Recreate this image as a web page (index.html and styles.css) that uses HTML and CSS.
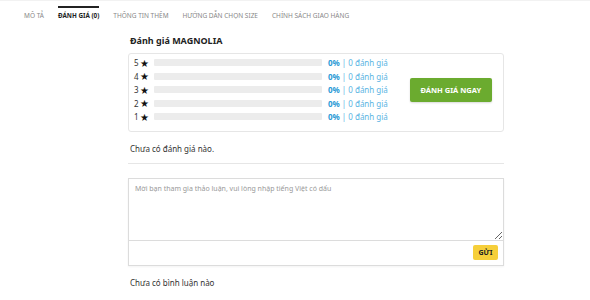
FILE: index.html
```html
<!DOCTYPE html>
<html lang="vi">
<head>
    <meta charset="UTF-8">
    <meta name="viewport" content="width=device-width, initial-scale=1.0">
    <title>Đánh giá MAGNOLIA</title>
    <link rel="stylesheet" href="styles.css">
</head>
<body>
    <ul class="tabs">
        <li>Mô tả</li>
        <li class="active">Đánh giá (0)</li>
        <li>Thông tin thêm</li>
        <li>Hướng dẫn chọn size</li>
        <li>Chính sách giao hàng</li>
    </ul>

    <div class="content">
        <h3 class="title">Đánh giá MAGNOLIA</h3>

        <div class="rating-box">
            <div class="rating-list">
                <div class="rating-row"><span class="num">5</span><span class="star">★</span><div class="bar"></div><span class="pct">0%</span><span class="count">| 0 đánh giá</span></div>
                <div class="rating-row"><span class="num">4</span><span class="star">★</span><div class="bar"></div><span class="pct">0%</span><span class="count">| 0 đánh giá</span></div>
                <div class="rating-row"><span class="num">3</span><span class="star">★</span><div class="bar"></div><span class="pct">0%</span><span class="count">| 0 đánh giá</span></div>
                <div class="rating-row"><span class="num">2</span><span class="star">★</span><div class="bar"></div><span class="pct">0%</span><span class="count">| 0 đánh giá</span></div>
                <div class="rating-row"><span class="num">1</span><span class="star">★</span><div class="bar"></div><span class="pct">0%</span><span class="count">| 0 đánh giá</span></div>
            </div>
            <div class="rate-action">
                <button class="rate-btn">Đánh giá ngay</button>
            </div>
        </div>

        <p class="empty">Chưa có đánh giá nào.</p>
        <hr class="divider">

        <div class="comment-box">
            <textarea placeholder="Mời bạn tham gia thảo luận, vui lòng nhập tiếng Việt có dấu"></textarea>
            <div class="comment-footer">
                <button class="send-btn">Gửi</button>
            </div>
        </div>

        <p class="empty last">Chưa có bình luận nào</p>
    </div>
</body>
</html>
```

FILE: styles.css
```css
body {
    margin: 0;
    font-family: "Noto Sans", "Open Sans", sans-serif;
    color: #333;
    background: #fff;
}

.tabs {
    list-style: none;
    margin: 0;
    padding: 0 0 0 24px;
    display: flex;
    gap: 14px;
    border-top: 1px solid #f2f2f2;
}

.tabs li {
    font-size: 6.5px;
    text-transform: uppercase;
    color: #888;
    padding: 3px 0 12px;
    border-top: 2px solid transparent;
    margin-top: 5px;
}

.tabs li.active {
    color: #222;
    font-size: 6.3px;
    font-weight: 700;
    border-top-color: #222;
}

.content {
    margin-left: 128px;
    width: 376px;
}

.title {
    font-size: 9px;
    font-weight: 700;
    color: #222;
    margin: 2px 0 6px 2px;
}

.rating-box {
    display: flex;
    border: 1px solid #e6e6e6;
    border-radius: 3px;
    padding: 2px 0 7px 5px;
}

.rating-list {
    display: flex;
    flex-direction: column;
}

.rating-row {
    display: flex;
    align-items: center;
    height: 13.5px;
    font-size: 8px;
}

.num {
    width: 6px;
    color: #333;
}

.star {
    font-size: 10px;
    color: #111;
    width: 14px;
}

.bar {
    width: 168px;
    height: 7px;
    background: #ececec;
    border-radius: 1px;
    margin-right: 6px;
}

.pct {
    color: #2a9ad6;
    font-weight: 700;
    margin-right: 2px;
}

.count {
    color: #5ab4e3;
}

.rate-action {
    flex: 1;
    display: flex;
    align-items: center;
    padding-left: 22px;
}

.rate-btn {
    width: 82px;
    height: 24px;
    background: #6bab2f;
    color: #fff;
    border: none;
    border-radius: 2px;
    font-family: inherit;
    font-size: 7.5px;
    font-weight: 700;
    text-transform: uppercase;
    box-shadow: 0 1px 2px rgba(0, 0, 0, 0.15);
}

.empty {
    font-size: 8px;
    color: #333;
    margin: 11px 0 0 2px;
}

.divider {
    border: none;
    border-top: 1px solid #e6e6e6;
    margin: 9px 0 14px;
}

.comment-box {
    border: 1px solid #dcdcdc;
    box-shadow: 0 1px 2px rgba(0, 0, 0, 0.05);
}

.comment-box textarea {
    display: block;
    box-sizing: border-box;
    width: 100%;
    height: 62px;
    border: none;
    border-bottom: 1px solid #dcdcdc;
    padding: 5px 6px;
    font-family: inherit;
    font-size: 7px;
    color: #333;
    resize: vertical;
}

.comment-box textarea::placeholder {
    color: #999;
}

.comment-footer {
    display: flex;
    justify-content: flex-end;
    padding: 4px 5px 5px;
}

.send-btn {
    width: 25px;
    height: 15px;
    background: #f6cf3a;
    color: #222;
    border: none;
    border-radius: 2px;
    font-family: inherit;
    font-size: 7px;
    font-weight: 700;
    text-transform: uppercase;
    padding: 0;
}

.empty.last {
    margin-top: 11px;
}
```
